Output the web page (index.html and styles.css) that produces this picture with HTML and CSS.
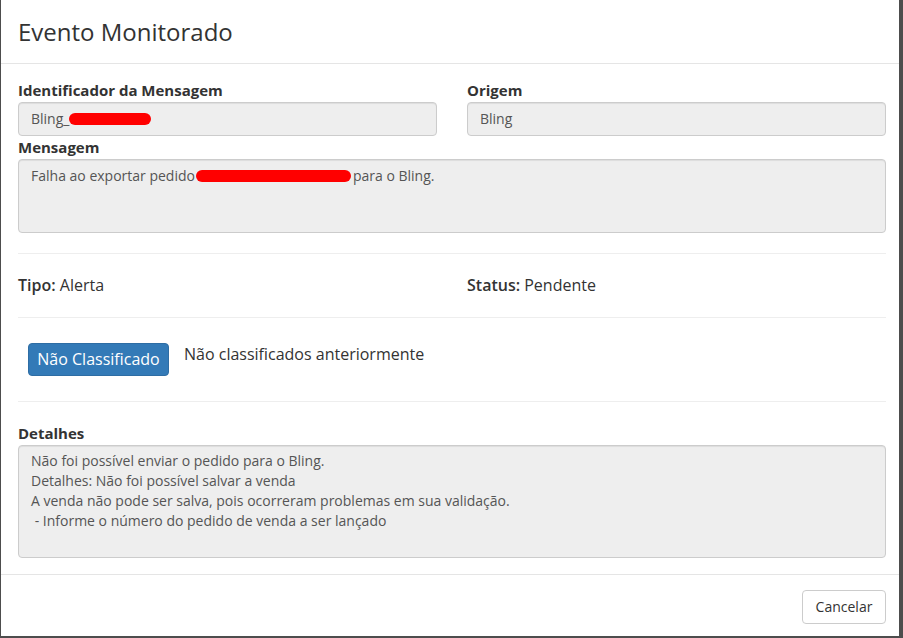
FILE: index.html
```html
<!DOCTYPE html>
<html lang="pt-BR">
<head>
<meta charset="utf-8">
<title>Evento Monitorado</title>
<link rel="stylesheet" href="styles.css">
</head>
<body>
<div class="modal">
  <div class="modal-header">
    <h4 class="modal-title">Evento Monitorado</h4>
  </div>
  <div class="modal-body">
    <div class="form-row">
      <div class="field">
        <label class="label">Identificador da Mensagem</label>
        <div class="input">Bling_<span class="redact redact-id"></span></div>
      </div>
      <div class="field">
        <label class="label">Origem</label>
        <div class="input">Bling</div>
      </div>
    </div>
    <div class="field">
      <label class="label">Mensagem</label>
      <div class="textarea textarea-msg">Falha ao exportar pedido<span class="redact redact-msg"></span>para o Bling.</div>
    </div>
    <hr class="divider">
    <div class="info-row">
      <div class="info"><strong>Tipo:</strong> Alerta</div>
      <div class="info"><strong>Status:</strong> Pendente</div>
    </div>
    <hr class="divider">
    <div class="class-row">
      <button class="btn btn-primary">Não Classificado</button>
      <span class="class-text">Não classificados anteriormente</span>
    </div>
    <hr class="divider">
    <div class="field field-details">
      <label class="label">Detalhes</label>
      <div class="textarea textarea-details">Não foi possível enviar o pedido para o Bling.
Detalhes: Não foi possível salvar a venda
A venda não pode ser salva, pois ocorreram problemas em sua validação.
 - Informe o número do pedido de venda a ser lançado</div>
    </div>
  </div>
  <div class="modal-footer">
    <button class="btn btn-default">Cancelar</button>
  </div>
</div>
</body>
</html>
```

FILE: styles.css
```css
* { box-sizing: border-box; }
html, body { margin: 0; padding: 0; }
body {
  background: #4d4d4d;
  font-family: "Open Sans", "Noto Sans", sans-serif;
  color: #333;
  width: 903px;
  height: 638px;
  overflow: hidden;
}
.modal {
  margin-left: 1px;
  width: 898px;
  height: 636px;
  background: #fff;
  display: flex;
  flex-direction: column;
}
.modal-header {
  height: 64px;
  border-bottom: 1px solid #e5e5e5;
  padding: 0 17px;
  display: flex;
  align-items: center;
}
.modal-title {
  margin: 0;
  font-size: 24px;
  font-weight: 400;
  line-height: 30px;
  color: #333;
}
.modal-body {
  padding: 16px 13px 16px 17px;
  flex: 1;
}
.form-row {
  display: grid;
  grid-template-columns: 1fr 1fr;
  column-gap: 30px;
}
.label {
  display: block;
  font-size: 15px;
  font-weight: 700;
  line-height: 21px;
  margin-bottom: 1px;
  color: #333;
}
.input {
  height: 34px;
  padding: 6px 12px;
  font-size: 14px;
  line-height: 20px;
  color: #555;
  background: #eee;
  border: 1px solid #ccc;
  border-radius: 4px;
  box-shadow: inset 0 1px 1px rgba(0,0,0,.075);
}
.form-row + .field .label { margin-bottom: 2px; line-height: 20px; margin-top: 1px; }
.textarea {
  padding: 6px 12px;
  font-size: 14px;
  line-height: 20px;
  color: #555;
  background: #eee;
  border: 1px solid #ccc;
  border-radius: 4px;
  box-shadow: inset 0 1px 1px rgba(0,0,0,.075);
  white-space: pre-wrap;
}
.textarea-msg { height: 74px; }
.field-details { padding-top: 1px; }
.field-details .label { margin-bottom: 1px; }
.textarea-details { height: 113px; padding-top: 5px; }
.redact {
  display: inline-block;
  background: #ff0000;
  border-radius: 6px;
  height: 12px;
  vertical-align: -1px;
}
.redact-id { width: 82px; }
.redact-msg { width: 155px; margin-left: 1px; margin-right: 2px; }
.divider {
  border: 0;
  border-top: 1px solid #eee;
  margin: 20px 0;
}
.info-row {
  display: grid;
  grid-template-columns: 1fr 1fr;
  column-gap: 30px;
  font-size: 16px;
  line-height: 23px;
}
.info strong { font-weight: 600; }
.class-row {
  display: flex;
  align-items: flex-start;
  padding: 5px 0 5px 10px;
}
.class-text {
  margin-left: 15px;
  font-size: 16px;
  line-height: 22px;
}
.btn {
  font-family: inherit;
  border-radius: 4px;
  cursor: pointer;
}
.btn-primary {
  background: #337ab7;
  border: 1px solid #2e6da4;
  color: #fff;
  font-size: 16px;
  line-height: 21px;
  padding: 5px 8px;
  height: 33px;
  width: 141px;
}
.modal-footer {
  border-top: 1px solid #e5e5e5;
  padding: 15px 13px 12px;
  display: flex;
  justify-content: flex-end;
}
.btn-default {
  background: #fff;
  border: 1px solid #ccc;
  color: #333;
  font-size: 14px;
  line-height: 20px;
  padding: 6px 12px;
  height: 34px;
  width: 84px;
}
```
